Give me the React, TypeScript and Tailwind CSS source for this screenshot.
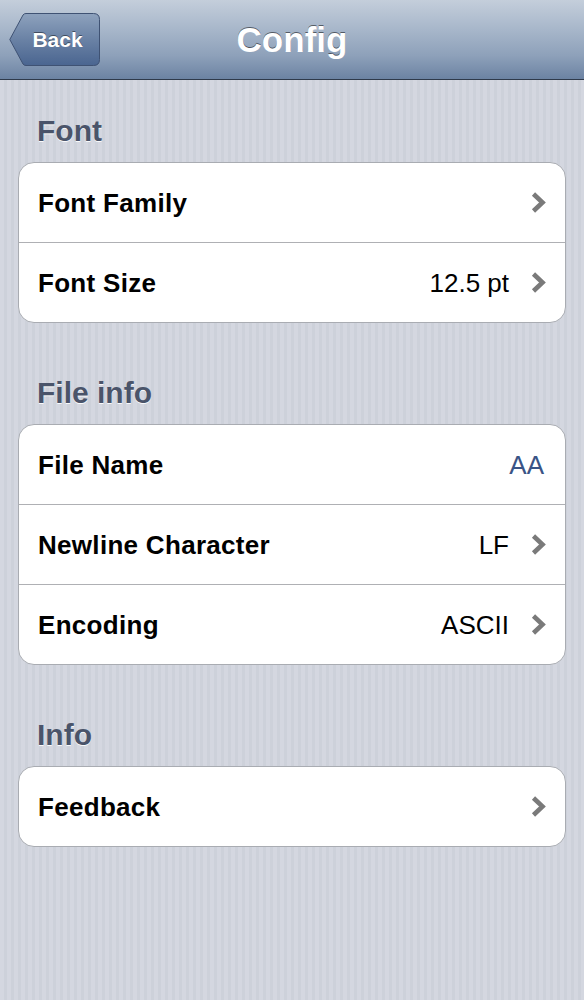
import React from "react";

type Row = { label: string; value?: string; valueBlue?: boolean; chevron?: boolean };

const sections: { title: string; rows: Row[] }[] = [
  {
    title: "Font",
    rows: [
      { label: "Font Family", chevron: true },
      { label: "Font Size", value: "12.5 pt", chevron: true },
    ],
  },
  {
    title: "File info",
    rows: [
      { label: "File Name", value: "AA", valueBlue: true },
      { label: "Newline Character", value: "LF", chevron: true },
      { label: "Encoding", value: "ASCII", chevron: true },
    ],
  },
  {
    title: "Info",
    rows: [{ label: "Feedback", chevron: true }],
  },
];

function Chevron() {
  return (
    <svg width="15" height="23" viewBox="0 0 15 23" className="shrink-0">
      <polyline
        points="2.5,3 11.5,11.5 2.5,20"
        fill="none"
        stroke="#7a7a7a"
        strokeWidth="4.6"
        strokeLinejoin="miter"
      />
    </svg>
  );
}

function BackButton() {
  return (
    <div className="relative flex h-[53px] w-[91px] items-center justify-center pl-[6px]">
      <svg width="91" height="53" viewBox="0 0 91 53" className="absolute inset-0">
        <defs>
          <linearGradient id="backFill" x1="0" y1="0" x2="0" y2="1">
            <stop offset="0" stopColor="#8ea2bd" />
            <stop offset="0.5" stopColor="#6a82a5" />
            <stop offset="1" stopColor="#4a6590" />
          </linearGradient>
        </defs>
        <path
          d="M17 0.5 H84.5 Q90.5 0.5 90.5 6.5 V46.5 Q90.5 52.5 84.5 52.5 H17 Q15 52.5 14 51 L0.8 26.5 L14 2 Q15 0.5 17 0.5 Z"
          fill="url(#backFill)"
          stroke="#3f5273"
          strokeWidth="1"
        />
      </svg>
      <span className="relative text-[21px] font-bold leading-none text-white [text-shadow:0_-1px_0_rgba(0,0,0,0.45)]">
        Back
      </span>
    </div>
  );
}

export default function App() {
  return (
    <div className="min-h-screen w-full bg-[repeating-linear-gradient(90deg,#d4d7e0_0px,#d4d7e0_4px,#cdd1da_4px,#cdd1da_7px)] font-['Liberation_Sans',Arial,sans-serif]">
      <div className="grid h-[80px] grid-cols-[1fr_auto_1fr] items-center border-b border-[#2f3a4b] bg-[linear-gradient(180deg,#c4cedb_0%,#a9b8cb_35%,#8ea1ba_70%,#6c83a3_100%)] px-[9px]">
        <div className="justify-self-start">
          <BackButton />
        </div>
        <h1 className="text-[35px] font-bold leading-none text-white [text-shadow:0_-1px_0_rgba(0,0,0,0.5)]">
          Config
        </h1>
        <div />
      </div>

      <div className="flex flex-col gap-[52px] px-[18px] pt-[33px] pb-10">
        {sections.map((section) => (
          <section key={section.title}>
            <h2 className="mb-[13px] h-[36px] pl-[19px] text-[30px] font-bold leading-[36px] text-[#4a546a] [text-shadow:0_1px_0_rgba(255,255,255,0.9)]">
              {section.title}
            </h2>
            <div className="overflow-hidden rounded-[16px] border border-[#a9acb2] bg-white">
              {section.rows.map((row, i) => (
                <div
                  key={row.label}
                  className={`flex items-center px-[19px] ${i > 0 ? "h-[80px] border-t border-[#afb0b4]" : "h-[79px]"}`}
                >
                  <span className="text-[26px] font-bold leading-none tracking-[0.3px] text-black">
                    {row.label}
                  </span>
                  <span className="flex-1" />
                  {row.value && (
                    <span
                      className={`text-[26px] leading-none ${
                        row.valueBlue ? "mr-[2px] text-[#3a5486]" : "mr-[22px] text-black"
                      }`}
                    >
                      {row.value}
                    </span>
                  )}
                  {row.chevron && <Chevron />}
                </div>
              ))}
            </div>
          </section>
        ))}
      </div>
    </div>
  );
}
